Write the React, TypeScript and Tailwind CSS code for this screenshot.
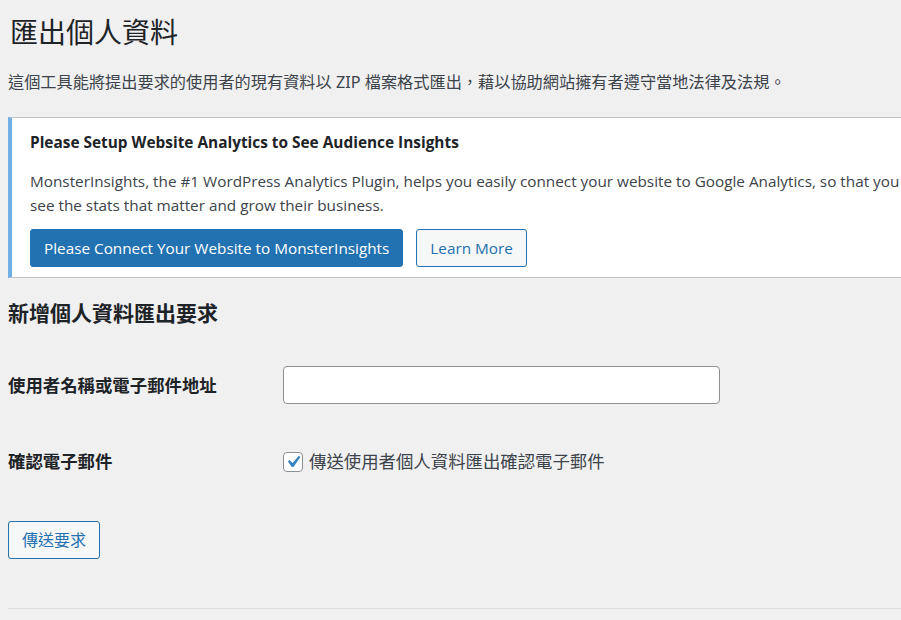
import React from "react";

const latin = "font-['Open_Sans','Noto_Sans','Noto_Sans_CJK_TC',sans-serif]";
const cjk = "font-['Noto_Sans','Noto_Sans_CJK_TC',sans-serif]";

export default function App() {
  return (
    <div className={`w-[901px] h-[620px] overflow-hidden bg-[#f0f0f1] text-[#3c434a] ${cjk}`}>
      <div className="w-[1200px] pl-[8px]">
        <h1 className="pl-[2px] pt-[12px] text-[28px] leading-[40px] font-normal text-[#1d2327]">匯出個人資料</h1>
        <p className="mt-[18px] text-[16.2px] leading-[24px] text-[#3c434a] whitespace-nowrap">
          這個工具能將提出要求的使用者的現有資料以 ZIP 檔案格式匯出，藉以協助網站擁有者遵守當地法律及法規。
        </p>

        <div className={`mt-[23px] w-[1100px] bg-white border border-[#c3c4c7] border-l-[4px] border-l-[#72aee6] pl-[18px] pt-[14px] pb-[10px] ${latin}`}>
          <h3 className="text-[15.4px] leading-[22px] font-bold text-[#1d2327] whitespace-nowrap">
            Please Setup Website Analytics to See Audience Insights
          </h3>
          <p className="mt-[15px] text-[15.3px] leading-[24px] text-[#3c434a]">
            <span className="block whitespace-nowrap">
              MonsterInsights, the #1 WordPress Analytics Plugin, helps you easily connect your website to Google Analytics, so that you can
            </span>
            <span className="block whitespace-nowrap">see the stats that matter and grow their business.</span>
          </p>
          <div className="mt-[12px] flex gap-[13px]">
            <button className="h-[38px] px-[13px] rounded-[3px] bg-[#2271b1] border border-[#2271b1] text-white text-[15.3px] leading-[36px] whitespace-nowrap">
              Please Connect Your Website to MonsterInsights
            </button>
            <button className="h-[38px] px-[13px] rounded-[3px] bg-[#f6f7f7] border border-[#2271b1] text-[#2271b1] text-[15.3px] leading-[36px] whitespace-nowrap">
              Learn More
            </button>
          </div>
        </div>

        <h2 className="mt-[21px] text-[21px] leading-[28px] font-bold text-[#1d2327]">新增個人資料匯出要求</h2>

        <div className="mt-[39px] flex items-center">
          <label className="w-[275px] text-[17.4px] leading-[24px] font-bold text-[#1d2327]">使用者名稱或電子郵件地址</label>
          <div className="w-[437px] h-[38px] bg-white border border-[#8c8f94] rounded-[4px]" />
        </div>

        <div className="mt-[45px] flex items-center h-[24px]">
          <label className="w-[275px] text-[17.4px] leading-[24px] font-bold text-[#1d2327]">確認電子郵件</label>
          <div className="flex items-center gap-[6px]">
            <div className="w-[20px] h-[20px] mt-[2px] bg-white border border-[#8c8f94] rounded-[4px] flex items-center justify-center overflow-visible">
              <svg width="24" height="24" viewBox="0 0 20 20" className="shrink-0 -mt-[1px]">
                <path d="M14.83 4.89l1.34.94-5.81 8.38H9.02L5.78 9.67l1.34-1.25 2.57 2.4z" fill="#3582c4" />
              </svg>
            </div>
            <span className="text-[17.4px] leading-[24px] text-[#3c434a]">傳送使用者個人資料匯出確認電子郵件</span>
          </div>
        </div>

        <button className="mt-[48px] h-[38px] px-[13px] rounded-[3px] bg-[#f6f7f7] border border-[#2271b1] text-[#2271b1] text-[16px] leading-[36px]">
          傳送要求
        </button>

        <div className="mt-[49px] h-px bg-[#dcdcde]" />
      </div>
    </div>
  );
}
